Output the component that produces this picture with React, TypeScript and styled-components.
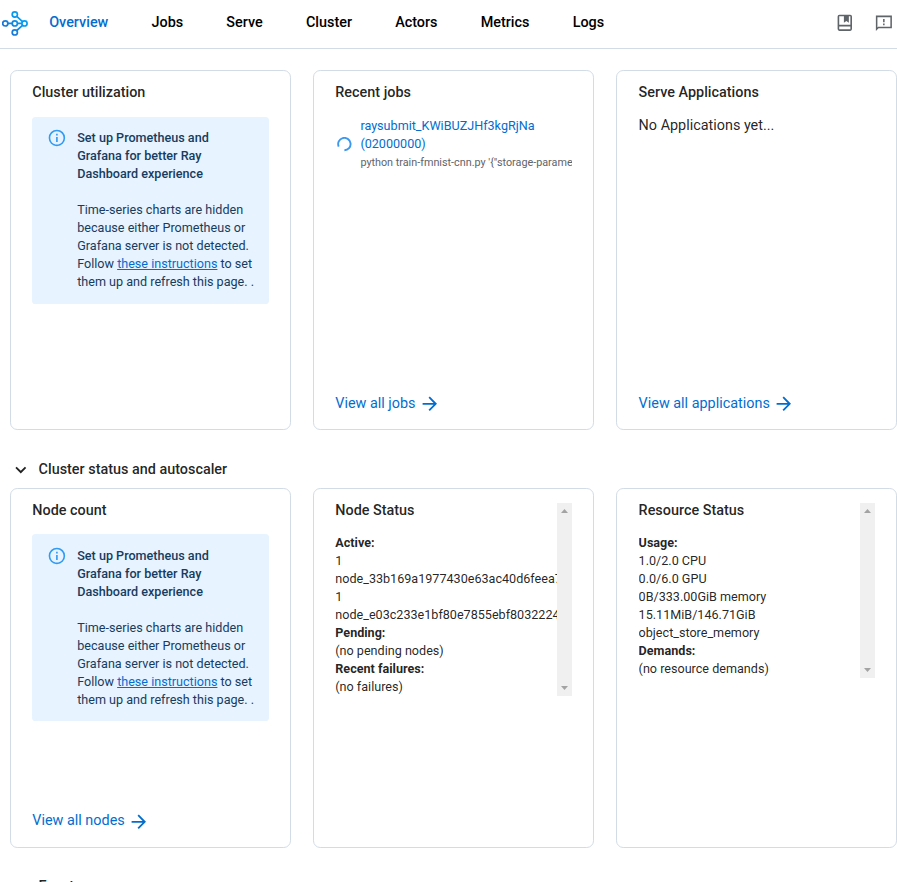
import React from "react";
import styled, { createGlobalStyle } from "styled-components";

const GlobalStyle = createGlobalStyle`
  *, *::before, *::after { box-sizing: border-box; }
  html, body { height: 882px; overflow: hidden; }
  body {
    margin: 0;
    background: #fff;
    color: rgba(0, 0, 0, 0.87);
    font-family: Roboto, "Liberation Sans", sans-serif;
    font-size: 12.6px;
    line-height: 18px;
  }
`;

const Header = styled.header`
  display: flex;
  align-items: center;
  height: 49px;
  padding: 0 2px 2px 2px;
  border-bottom: 1px solid #d2dce6;
`;

const LogoIcon = styled.svg`
  flex: none;
  display: block;
  margin: 1px 21.2px 0 0;
`;

const Nav = styled.nav`
  display: flex;
  flex: 1;
  gap: 43.2px;
`;

const NavItem = styled.a<{ $active?: boolean }>`
  color: ${(p) => (p.$active ? "#036dcf" : "#000")};
  font-size: 14.4px;
  font-weight: 500;
  line-height: 18px;
`;

const Actions = styled.div`
  display: flex;
  gap: 18px;
`;

const ActionIcon = styled.svg`
  display: block;
  fill: #5f6469;
`;

const Row = styled.div`
  display: grid;
  grid-template-columns: repeat(3, 281px);
  column-gap: 22px;
  padding-left: 10px;
`;

const TopRow = styled(Row)`
  margin-top: 21px;
`;

const Card = styled.section`
  display: flex;
  flex-direction: column;
  height: 360px;
  padding: 13px 21px 13px 21.3px;
  border: 1px solid #d2dce6;
  border-radius: 7.2px;

  &:nth-child(3) {
    padding-left: 21.6px;
  }
`;

const ScrollCard = styled(Card)`
  padding-top: 14px;
`;

const Title = styled.h3`
  margin: 0;
  font-size: 14.4px;
  font-weight: 500;
  line-height: 18px;
`;

const Alert = styled.div<{ $pad: number }>`
  display: flex;
  flex: none;
  height: 187px;
  padding: ${(p) => p.$pad}px 14px 0 16px;
  border-radius: 3.6px;
  background: #e7f3fe;
  color: #163c5f;
`;

const UtilizationBody = styled.div`
  margin: 15px 0 0 -0.3px;
`;

const NodeCountBody = styled.div`
  margin: 14px 0 0 -0.3px;
`;

const AlertIcon = styled.svg`
  flex: none;
  display: block;
  margin: -1px 10.6px 0 -1.2px;
  fill: #319af3;
`;

const AlertText = styled.div`
  width: 182px;
  white-space: nowrap;
  strong { font-weight: 500; }
`;

const InlineLink = styled.a`
  color: #036dcf;
  text-decoration: underline;
`;

const Job = styled.div`
  display: flex;
  align-items: center;
  margin-top: 15px;
`;

const Spinner = styled.svg`
  flex: none;
  display: block;
  margin: 0 8.4px 0 1.7px;
`;

const JobText = styled.div`
  min-width: 0;
  color: #036dcf;
`;

const Command = styled.div`
  overflow: hidden;
  padding-top: 1px;
  color: #5f6469;
  font-size: 10.8px;
  white-space: nowrap;
`;

const Empty = styled.div`
  margin-top: 15px;
  font-size: 14.4px;
`;

const FooterLink = styled.a`
  display: flex;
  align-items: center;
  margin-top: auto;
  color: #036dcf;
  font-size: 14.4px;
  line-height: 20px;
`;

const Arrow = styled.svg`
  display: block;
  margin: 1px 0 1px 3.3px;
  fill: #036dcf;
`;

const FooterLabel = styled.span<{ $lift: number }>`
  margin-bottom: ${(p) => p.$lift}px;
`;

const SectionHeader = styled.div`
  display: flex;
  align-items: center;
  height: 22px;
  margin: 28px 0 8px;
  padding-left: 10px;
`;

const EventsHeader = styled(SectionHeader)`
  margin-top: 27px;
`;

const SectionTitle = styled(Title)`
  margin-top: 2px;
`;

const Chevron = styled.svg`
  display: block;
  margin: 2px 7px 0 0;
  fill: rgba(0, 0, 0, 0.87);
`;

const ScrollPane = styled.div<{ $height: number }>`
  display: flex;
  height: ${(p) => p.$height}px;
`;

const PaneText = styled.div`
  flex: 1;
  min-width: 0;
  overflow: hidden;
  margin-top: -1px;
  white-space: nowrap;
`;

const PaneBody = styled.div`
  margin-top: 14px;
  strong { font-weight: 700; }
`;

const Scrollbar = styled.div`
  display: flex;
  flex-direction: column;
  justify-content: space-between;
  align-items: center;
  width: 15px;
  padding: 6px 0;
  background: #f0f0f0;
`;

const ScrollArrow = styled.svg`
  display: block;
  fill: #a3a3a3;
`;

const ArrowLink = ({ children, lift = 0 }: { children: string; lift?: number }) => (
  <FooterLink>
    <FooterLabel $lift={lift}>{children}</FooterLabel>
    <Arrow width="21.6" height="21.6" viewBox="0 0 24 24">
      <path d="M12 4l-1.41 1.41L16.17 11H4v2h12.17l-5.58 5.59L12 20l8-8z" />
    </Arrow>
  </FooterLink>
);

const SetupAlert = ({ pad }: { pad: number }) => (
  <Alert $pad={pad}>
    <AlertIcon width="19.8" height="19.8" viewBox="0 0 24 24">
      <path d="M11,9H13V7H11M12,20C7.59,20 4,16.41 4,12C4,7.59 7.59,4 12,4C16.41,4 20,7.59 20,12C20,16.41 16.41,20 12,20M12,2A10,10 0 0,0 2,12A10,10 0 0,0 12,22A10,10 0 0,0 22,12A10,10 0 0,0 12,2M11,17H13V11H11V17Z" />
    </AlertIcon>
    <AlertText>
      <strong>
        Set up Prometheus and
        <br />
        Grafana for better Ray
        <br />
        Dashboard experience
      </strong>
      <br />
      <br />
      Time-series charts are hidden
      <br />
      because either Prometheus or
      <br />
      Grafana server is not detected.
      <br />
      Follow <InlineLink>these instructions</InlineLink> to set
      <br />
      them up and refresh this page. .
    </AlertText>
  </Alert>
);

const StatusPane = ({ title, height, children }: { title: string; height: number; children: React.ReactNode }) => (
  <ScrollPane $height={height}>
    <PaneText>
      <Title>{title}</Title>
      <PaneBody>{children}</PaneBody>
    </PaneText>
    <Scrollbar>
      <ScrollArrow width="7" height="4" viewBox="0 0 7 4">
        <path d="M3.5 0L7 4H0z" />
      </ScrollArrow>
      <ScrollArrow width="7" height="4" viewBox="0 0 7 4">
        <path d="M0 0h7L3.5 4z" />
      </ScrollArrow>
    </Scrollbar>
  </ScrollPane>
);

const navItems = ["Overview", "Jobs", "Serve", "Cluster", "Actors", "Metrics", "Logs"];

export default function App() {
  return (
    <>
      <GlobalStyle />
      <Header>
        <LogoIcon width="26" height="26" viewBox="0 0 26 26" fill="none" stroke="url(#ray)" strokeWidth="1.7">
          <defs>
            <linearGradient id="ray" gradientUnits="userSpaceOnUse" x1="4" y1="22" x2="22" y2="6">
              <stop offset="0.1" stopColor="#1b73d4" />
              <stop offset="1" stopColor="#02a4f6" />
            </linearGradient>
          </defs>
          <circle cx="12.8" cy="3.5" r="2.6" />
          <circle cx="3.3" cy="12.4" r="2.6" />
          <circle cx="12.8" cy="12.4" r="2.6" />
          <circle cx="22.5" cy="12.4" r="2.6" />
          <circle cx="12.8" cy="21.4" r="2.6" />
          <path d="M6 12.4h4.1M15.5 12.4h4.3M14.8 5.4l5.7 5.2M14.8 19.5l5.7-5.1" />
        </LogoIcon>
        <Nav>
          {navItems.map((name, i) => (
            <NavItem key={name} $active={i === 0}>
              {name}
            </NavItem>
          ))}
        </Nav>
        <Actions>
          <ActionIcon width="21.6" height="21.6" viewBox="0 0 24 24">
            <path
              fillRule="evenodd"
              d="M6 3h12a2 2 0 0 1 2 2v14a2 2 0 0 1-2 2H6a2 2 0 0 1-2-2V5a2 2 0 0 1 2-2zM5.8 4.8v9.4h12.4V4.8H16.5v7.2l-2.75-2L11 12V4.8zM5.8 16v3.2h12.4V16z"
            />
          </ActionIcon>
          <ActionIcon width="21.6" height="21.6" viewBox="0 0 24 24">
            <path
              fillRule="evenodd"
              d="M3.2 4H21v14H6.2l-3 3zM4.9 5.7v11.4l.8-.8h13.6V5.7zM11.2 7.7h1.7v3.8h-1.7zM11.2 12.9h1.7v1.7h-1.7z"
            />
          </ActionIcon>
        </Actions>
      </Header>

      <TopRow>
        <Card>
          <Title>Cluster utilization</Title>
          <UtilizationBody>
            <SetupAlert pad={12} />
          </UtilizationBody>
        </Card>
        <Card>
          <Title>Recent jobs</Title>
          <Job>
            <Spinner width="15" height="15" viewBox="0 0 15 15" fill="none" stroke="#3c97ee" strokeWidth="1.9">
              <path d="M1.7 9.6A6.2 6.2 0 1 1 7.4 13.3" />
            </Spinner>
            <JobText>
              raysubmit_KWiBUZJHf3kgRjNa
              <br />
              (02000000)
              <Command>python train-fmnist-cnn.py '{'{"'}storage-parame</Command>
            </JobText>
          </Job>
          <ArrowLink>View all jobs</ArrowLink>
        </Card>
        <Card>
          <Title>Serve Applications</Title>
          <Empty>No Applications yet...</Empty>
          <ArrowLink>View all applications</ArrowLink>
        </Card>
      </TopRow>

      <SectionHeader>
        <Chevron width="21.6" height="21.6" viewBox="0 0 24 24">
          <path d="M7.41 8.59L12 13.17l4.59-4.58L18 10l-6 6-6-6z" />
        </Chevron>
        <SectionTitle>Cluster status and autoscaler</SectionTitle>
      </SectionHeader>

      <Row>
        <Card>
          <Title>Node count</Title>
          <NodeCountBody>
            <SetupAlert pad={13} />
          </NodeCountBody>
          <ArrowLink lift={2}>View all nodes</ArrowLink>
        </Card>
        <ScrollCard>
          <StatusPane title="Node Status" height={193}>
            <strong>Active:</strong>
            <br />1<br />
            node_33b169a1977430e63ac40d6feea7
            <br />1<br />
            node_e03c233e1bf80e7855ebf8032224
            <br />
            <strong>Pending:</strong>
            <br />
            (no pending nodes)
            <br />
            <strong>Recent failures:</strong>
            <br />
            (no failures)
          </StatusPane>
        </ScrollCard>
        <ScrollCard>
          <StatusPane title="Resource Status" height={175}>
            <strong>Usage:</strong>
            <br />
            1.0/2.0 CPU
            <br />
            0.0/6.0 GPU
            <br />
            0B/333.00GiB memory
            <br />
            15.11MiB/146.71GiB
            <br />
            object_store_memory
            <br />
            <strong>Demands:</strong>
            <br />
            (no resource demands)
          </StatusPane>
        </ScrollCard>
      </Row>

      <EventsHeader>
        <Chevron width="21.6" height="21.6" viewBox="0 0 24 24">
          <path d="M7.41 8.59L12 13.17l4.59-4.58L18 10l-6 6-6-6z" />
        </Chevron>
        <SectionTitle>Events</SectionTitle>
      </EventsHeader>
    </>
  );
}
